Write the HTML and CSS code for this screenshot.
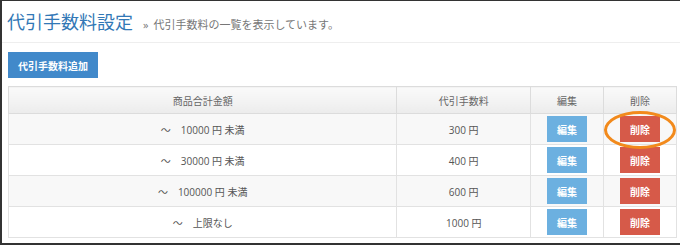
FILE: index.html
```html
<!DOCTYPE html>
<html lang="ja">
<head>
    <meta charset="UTF-8">
    <title>代引手数料設定</title>
    <link rel="stylesheet" href="styles.css">
</head>
<body>
    <div class="frame">
        <header class="page-header">
            <h1>代引手数料設定</h1>
            <span class="sub"><span class="raquo">»</span>代引手数料の一覧を表示しています。</span>
        </header>

        <button class="btn btn-add">代引手数料追加</button>

        <table class="fee-table">
            <thead>
                <tr>
                    <th class="col-range">商品合計金額</th>
                    <th class="col-fee">代引手数料</th>
                    <th class="col-btn">編集</th>
                    <th class="col-btn">削除</th>
                </tr>
            </thead>
            <tbody>
                <tr>
                    <td><span class="tilde">〜</span>10000 円 未満</td>
                    <td>300 円</td>
                    <td><button class="btn btn-edit">編集</button></td>
                    <td class="mark-cell"><button class="btn btn-del">削除</button><span class="mark"></span></td>
                </tr>
                <tr>
                    <td><span class="tilde">〜</span>30000 円 未満</td>
                    <td>400 円</td>
                    <td><button class="btn btn-edit">編集</button></td>
                    <td><button class="btn btn-del">削除</button></td>
                </tr>
                <tr>
                    <td><span class="tilde">〜</span>100000 円 未満</td>
                    <td>600 円</td>
                    <td><button class="btn btn-edit">編集</button></td>
                    <td><button class="btn btn-del">削除</button></td>
                </tr>
                <tr>
                    <td><span class="tilde">〜</span>上限なし</td>
                    <td>1000 円</td>
                    <td><button class="btn btn-edit">編集</button></td>
                    <td><button class="btn btn-del">削除</button></td>
                </tr>
            </tbody>
        </table>
    </div>
</body>
</html>
```

FILE: styles.css
```css
body {
    margin: 0;
    font-family: "Open Sans", "Noto Sans CJK JP", sans-serif;
    color: #555;
    background: #fff;
}
.frame {
    width: 675px;
    height: 242px;
    border: 2px solid #333;
    border-top-width: 1px;
    padding-left: 6px;
    overflow: hidden;
}
.page-header {
    display: flex;
    align-items: baseline;
    height: 42px;
    margin-left: -6px;
    padding-left: 5px;
    border-bottom: 1px solid #eee;
    box-sizing: border-box;
}
h1 {
    margin: 0;
    padding-top: 8px;
    font-size: 18px;
    font-weight: normal;
    color: #3278b6;
    line-height: 26px;
}
.sub {
    margin-left: 10px;
    font-size: 11px;
    color: #777;
}
.raquo {
    margin-right: 5px;
}
.btn {
    border: none;
    border-radius: 0;
    color: #fff;
    font-family: "Noto Sans CJK JP", sans-serif;
    font-weight: bold;
    font-size: 10px;
    cursor: pointer;
    padding: 0;
}
.btn-add {
    display: block;
    margin-top: 9px;
    width: 90px;
    height: 26px;
    background: #4189ca;
}
.fee-table {
    margin-top: 8px;
    width: 669px;
    border-collapse: collapse;
    font-size: 10px;
    text-align: center;
}
.fee-table th,
.fee-table td {
    border: 1px solid #e2e2e2;
    padding: 0;
}
.fee-table th {
    height: 26px;
    font-weight: normal;
    color: #666;
    background: linear-gradient(#fafafa, #ececec);
    border-color: #dcdcdc;
}
.fee-table td {
    height: 30px;
}
.fee-table tbody tr:nth-child(odd) {
    background: #f8f8f8;
}
.col-range { width: 388px; }
.col-fee { width: 133px; }
.col-btn { width: 72px; }
.tilde {
    margin-right: 10px;
}
.btn-edit,
.btn-del {
    width: 40px;
    height: 26px;
    vertical-align: middle;
}
.btn-edit {
    background: #6cb0e0;
}
.btn-del {
    background: #d65a49;
}
.mark-cell {
    position: relative;
}
.mark {
    position: absolute;
    left: 0;
    top: -3px;
    width: 66px;
    height: 32px;
    border: 3px solid #f28a1c;
    border-radius: 50%;
}
```
